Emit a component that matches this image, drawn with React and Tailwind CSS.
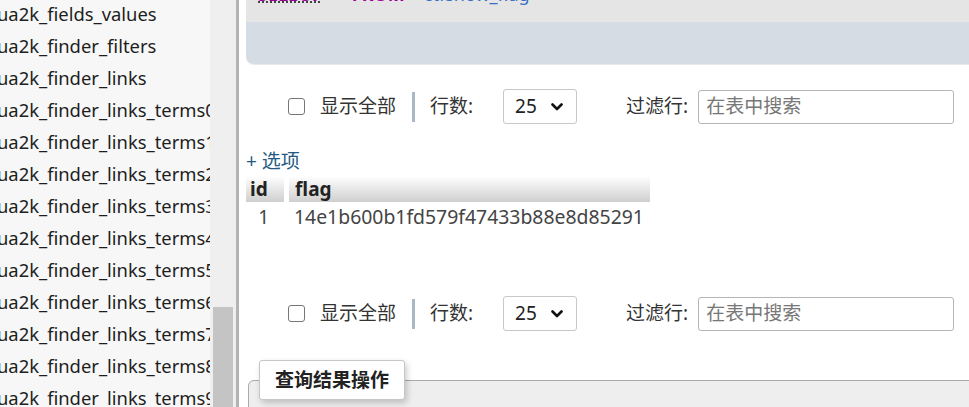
/***
 * Table browse view: navigation list on the left,
 * query box, paging controls and result grid on the right.
 */

const tables = [
    "ua2k_fields_values",
    "ua2k_finder_filters",
    "ua2k_finder_links",
    "ua2k_finder_links_terms0",
    "ua2k_finder_links_terms1",
    "ua2k_finder_links_terms2",
    "ua2k_finder_links_terms3",
    "ua2k_finder_links_terms4",
    "ua2k_finder_links_terms5",
    "ua2k_finder_links_terms6",
    "ua2k_finder_links_terms7",
    "ua2k_finder_links_terms8",
    "ua2k_finder_links_terms9",
];

function Controls() {
    return (
        <div className="flex items-center h-[35px] pl-[42px] text-[#333]">
            {/** SHOW ALL */}
            <div className="w-[17px] h-[17px] border-[1.5px] border-[#767676] rounded-[3px] bg-white" />
            <span className="ml-[15px]">显示全部</span>
            <div className="ml-[16px] w-[3px] h-[30px] bg-[#a9b7c6]" />
            {/** ROWS */}
            <span className="ml-[15px]">行数:</span>
            <div className="ml-[30px] w-[74px] h-[35px] border border-[#c8c8c8] rounded-[3px] flex items-center justify-between pl-[11px] pr-[13px] text-[#222] bg-white">
                <span>25</span>
                <svg width="12" height="8" viewBox="0 0 12 8" fill="none">
                    <path d="M1.5 1.5 L6 6 L10.5 1.5" stroke="#111" strokeWidth="2.6" strokeLinecap="round" strokeLinejoin="round" />
                </svg>
            </div>
            {/** FILTER */}
            <span className="ml-[49px]">过滤行:</span>
            <div className="ml-[10px] w-[256px] h-[34px] border border-[#b5b5b5] rounded-[3px] flex items-center pl-[7px] text-[#777] bg-white">
                在表中搜索
            </div>
        </div>
    )
}

export default function App() {
    return (
        <div
            className="flex w-[969px] h-[407px] overflow-hidden bg-white text-[19px]"
            style={{ fontFamily: '"Noto Sans", "Noto Sans CJK SC", sans-serif' }}
        >
            {/** NAVIGATION */}
            <aside className="flex shrink-0 w-[239px] bg-[#f7f7f7] border-r-[3px] border-[#b3b3b3]">
                <div className="w-[210px] overflow-hidden">
                    <ul className="-mt-[2px] -ml-[3px] text-[18.4px] text-[#1e1e1e]">
                        {tables.map((t) => (
                            <li key={t} className="h-[32px] leading-[32px] whitespace-nowrap">{t}</li>
                        ))}
                    </ul>
                </div>
                <div className="w-[26px] bg-[#efefef] flex flex-col pr-[3px]">
                    <div className="flex-1" />
                    <div className="h-[100px] ml-[3px] bg-[#c4c4c4]" />
                </div>
            </aside>

            {/** CONTENT */}
            <main className="flex-1 pl-[7px] overflow-hidden">
                {/** SQL BOX */}
                <div className="-mr-[20px] rounded-bl-[8px] overflow-hidden border-b border-[#e9e9e9]">
                    <div className="h-[22px] bg-[#e5e5e5] overflow-hidden pl-[12px]">
                        <div className="-mt-[19px] whitespace-nowrap font-bold text-[18px]">
                            <span className="text-[#990099] underline decoration-dotted decoration-[#333]">SELECT</span>
                            <span className="ml-[10px] text-[#444]">*</span>
                            <span className="ml-[12px] text-[#990099]">FROM</span>
                            <span className="ml-[14px] text-[#3a6fc4] font-normal">`ctfshow_flag`</span>
                        </div>
                    </div>
                    <div className="h-[42px] bg-[#d5dce4]" />
                </div>

                <div className="mt-[24px]">
                    <Controls />
                </div>

                {/** OPTIONS */}
                <div className="mt-[25px] leading-[24px] text-[#235a81]">+ 选项</div>

                {/** RESULTS */}
                <div className="mt-[3px] grid grid-cols-[38px_361px] gap-x-[5px] gap-y-[3px] text-[#222]">
                    <div className="h-[26px] leading-[26px] pl-[4px] font-bold bg-gradient-to-b from-white to-[#cfcfcf]">id</div>
                    <div className="h-[26px] leading-[26px] pl-[6px] font-bold bg-gradient-to-b from-white to-[#cfcfcf]">flag</div>
                    <div className="h-[24px] leading-[24px] text-right pr-[15px] text-[#444]">1</div>
                    <div className="h-[24px] leading-[24px] pl-[5px] text-[19.4px] text-[#444] whitespace-nowrap">14e1b600b1fd579f47433b88e8d85291</div>
                </div>

                <div className="mt-[67px]">
                    <Controls />
                </div>

                {/** QUERY RESULT OPERATIONS */}
                <fieldset className="mt-[29px] ml-[2px] -mr-[20px] h-[80px] pl-[10px] border border-[#aaa] rounded-tl-[6px] bg-[#eeeeee]">
                    <legend className="h-[40px] px-[15px] flex items-center font-bold text-[#222] bg-white border border-[#c6c6c6] rounded-[3px] shadow-[2px_3px_6px_rgba(0,0,0,0.2)]">
                        查询结果操作
                    </legend>
                </fieldset>
            </main>
        </div>
    )
}
